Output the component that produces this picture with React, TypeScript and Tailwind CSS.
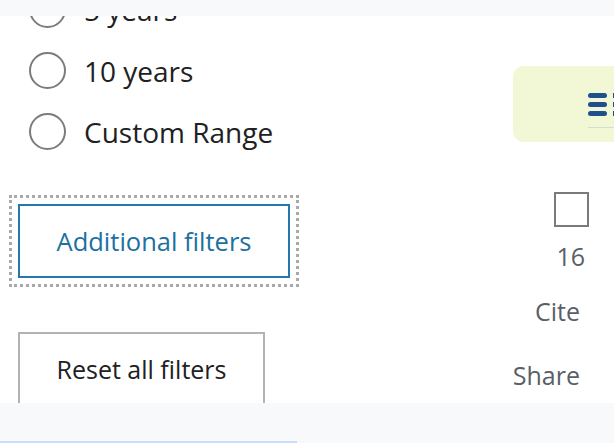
import React from 'react';

const font = { fontFamily: '"Segoe UI", "Open Sans", "Noto Sans", sans-serif' };

const ranges = ['5 years', '10 years', 'Custom Range'];

const Radio: React.FC<{ label: string }> = ({ label }) => (
    <label className="flex h-[61px] items-center gap-[18px] pl-[29px]">
        <span className="h-[37px] w-[37px] shrink-0 rounded-full border-2 border-[#7c7c7c] bg-white" />
        <span className="text-[28px] text-[#212121]">{label}</span>
    </label>
);

export default function App() {
    return (
        <div className="flex h-[443px] w-[614px] flex-col overflow-hidden bg-white" style={font}>
            {/* sticky header strip */}
            <div className="relative z-10 h-[16px] shrink-0 bg-[#f8f9fb]" />

            <div className="flex min-h-0 flex-1 overflow-hidden">
                {/* Filters column */}
                <div className="flex w-[300px] shrink-0 flex-col">
                    <div className="mt-[-37px]">
                        {ranges.map((r) => (
                            <Radio key={r} label={r} />
                        ))}
                    </div>

                    <div className="ml-[18px] mt-[42px]">
                        <button className="flex h-[74px] w-[272px] items-center justify-center border-2 border-[#2478ab] bg-white text-[25.5px] text-[#20709f] outline-dotted outline-[3px] outline-offset-[6px] outline-[#a9a9a9]">
                            Additional filters
                        </button>
                    </div>

                    <div className="ml-[18px] mt-[54px]">
                        <button className="flex h-[76px] w-[247px] items-center justify-center border-2 border-[#b3b3b3] bg-white text-[25px] text-[#212121]">
                            Reset all filters
                        </button>
                    </div>
                </div>

                {/* Results column */}
                <div className="flex min-w-0 flex-1 flex-col">
                    <div className="ml-[213px] mt-[50px] flex h-[76px] w-[200px] shrink-0 items-center rounded-[11px] bg-[#f2f7d5] pl-[75px]">
                        <div className="flex flex-col gap-[4px] border-b border-[#d8dccb] pb-[11px] pt-[12px]">
                            <div className="flex items-center gap-[6px]">
                                <div className="flex flex-col gap-[4px]">
                                    <span className="block h-[5px] w-[19px] rounded-full bg-[#1f4f8c]" />
                                    <span className="block h-[5px] w-[19px] rounded-full bg-[#1f4f8c]" />
                                    <span className="block h-[5px] w-[19px] rounded-full bg-[#1f4f8c]" />
                                </div>
                                <div className="flex flex-col gap-[4px]">
                                    <span className="block h-[5px] w-[4px] bg-[#1f4f8c]" />
                                    <span className="block h-[5px] w-[4px] bg-[#1f4f8c]" />
                                    <span className="block h-[5px] w-[4px] bg-[#1f4f8c]" />
                                </div>
                            </div>
                        </div>
                    </div>

                    <div className="mt-[50px] flex w-[314px] shrink-0 flex-col items-end pr-[34px]">
                        <span className="mr-[-9px] block h-[35px] w-[35px] border-2 border-[#7a7a7a] bg-white" />
                        <span className="mr-[-5px] mt-[13px] text-[25px] leading-[32px] text-[#5a5f66]">16</span>
                        <span className="mt-[23px] text-[25px] leading-[32px] text-[#5a5f66]">Cite</span>
                        <span className="mt-[32px] text-[25px] leading-[32px] text-[#5a5f66]">Share</span>
                    </div>
                </div>
            </div>

            {/* bottom strip */}
            <div className="relative z-10 h-[40px] shrink-0 bg-[#f8f9fb]">
                <div className="absolute bottom-0 left-0 h-[2px] w-[297px] bg-[#c9dcfb]" />
            </div>
        </div>
    );
}
